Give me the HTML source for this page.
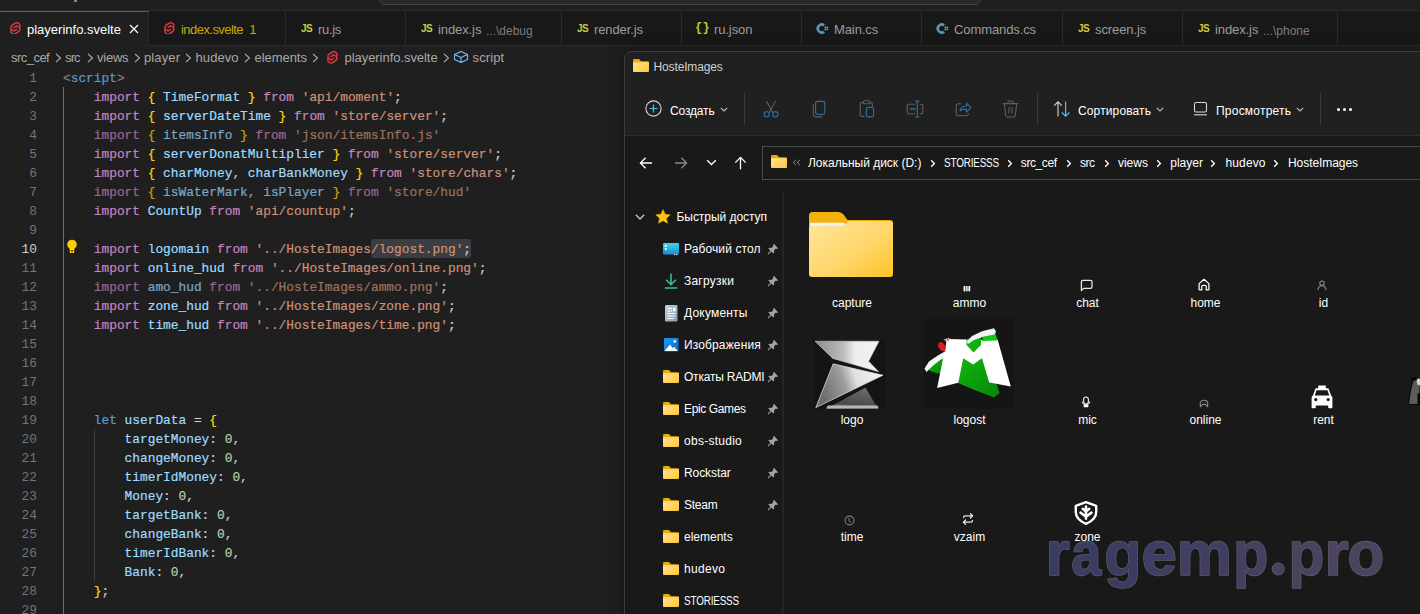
<!DOCTYPE html>
<html><head><meta charset="utf-8">
<style>
*{margin:0;padding:0;box-sizing:border-box}
html,body{width:1420px;height:614px;overflow:hidden;background:#1f1f1f;font-family:"Liberation Sans",sans-serif}
.abs{position:absolute}
#tb{position:absolute;left:0;top:0;width:1420px;height:10px;background:#1f1f1f}
#cc{position:absolute;left:379px;top:-30px;width:602px;height:35px;border:1px solid #454545;border-radius:6px;background:#2a2a2a}
#tabs{position:absolute;left:0;top:10px;width:1420px;height:36px;background:#181818;border-top:1px solid #2b2b2b;border-bottom:1px solid #2b2b2b}
.tab{position:absolute;top:10px;height:36px;border-right:1px solid #2b2b2b;border-top:1px solid #2b2b2b;border-bottom:1px solid #2b2b2b;background:#181818}
.tab.act{background:#1f1f1f;border-top:1px solid #0078d4;border-bottom:none;top:11px;height:35px}
.tabt{top:22px;font-size:13px;line-height:16px;white-space:nowrap}
.tabd{top:23px;font-size:12px;line-height:16px;color:#7d7d7d;white-space:nowrap}
.jsic{font:bold 10px/12px "Liberation Sans",sans-serif;color:#cbcb41;letter-spacing:-0.5px}
.jsonic{font:bold 12px/14px "Liberation Mono",monospace;color:#cbcb41;letter-spacing:-1px}
.bct{top:50px;font-size:13px;line-height:16px;color:#a9a9a9;white-space:nowrap}
.cl{position:absolute;height:19px;line-height:19px;font-family:"Liberation Mono",monospace;font-size:12.83px;white-space:pre;padding-top:1px;-webkit-text-stroke:0.2px currentColor}
.dim{opacity:0.72}
.ln{position:absolute;left:0;width:37px;height:19px;line-height:19px;text-align:right;font-family:"Liberation Mono",monospace;font-size:12.83px;color:#6e7681;padding-top:1px}
.ln.act{color:#cccccc}
.ext{font-size:12px;line-height:15px;white-space:nowrap}
.lbl{z-index:3;width:118px;text-align:center;color:#ffffff}
#exx{position:absolute;left:624px;top:52px;width:820px;height:600px;border:1px solid #3c3c3c;border-radius:8px 0 0 0;background:#191919;overflow:hidden}
</style></head><body>
<div id="tb"></div>
<div id="cc"></div>
<div class="abs" style="left:74px;top:0;width:3px;height:2px;background:#9a9a9a;border-radius:1px"></div>
<div id="tabs"></div>
<div class="tab act" style="left:0px;width:149px"></div>
<svg class="abs" style="left:9.5px;top:21.8px" width="11" height="12.5" viewBox="2 0 20.4 23.4"><path d="M10.354 21.125a4.44 4.44 0 0 1-4.765-1.767 4.109 4.109 0 0 1-.703-3.107 3.898 3.898 0 0 1 .134-.522l.105-.321.287.21a7.21 7.21 0 0 0 2.186 1.092l.208.063-.02.208a1.253 1.253 0 0 0 .226.83 1.337 1.337 0 0 0 1.435.533 1.231 1.231 0 0 0 .343-.15l5.59-3.562a1.164 1.164 0 0 0 .524-.778 1.242 1.242 0 0 0-.211-.937 1.338 1.338 0 0 0-1.435-.533 1.23 1.23 0 0 0-.343.15l-2.133 1.36a4.078 4.078 0 0 1-1.135.499 4.44 4.44 0 0 1-4.765-1.766 4.108 4.108 0 0 1-.702-3.108 3.855 3.855 0 0 1 1.742-2.582l5.589-3.563a4.072 4.072 0 0 1 1.135-.499 4.44 4.44 0 0 1 4.765 1.767 4.109 4.109 0 0 1 .703 3.107 3.943 3.943 0 0 1-.134.522l-.105.321-.286-.21a7.204 7.204 0 0 0-2.187-1.093l-.208-.063.02-.207a1.255 1.255 0 0 0-.226-.831 1.337 1.337 0 0 0-1.435-.532 1.231 1.231 0 0 0-.343.15L8.62 9.368a1.162 1.162 0 0 0-.524.778 1.24 1.24 0 0 0 .211.937 1.338 1.338 0 0 0 1.435.533 1.235 1.235 0 0 0 .344-.151l2.132-1.36a4.067 4.067 0 0 1 1.135-.498 4.44 4.44 0 0 1 4.765 1.766 4.108 4.108 0 0 1 .702 3.108 3.857 3.857 0 0 1-1.742 2.583l-5.589 3.562a4.072 4.072 0 0 1-1.135.499m10.358-17.95C18.484-.015 14.082-.96 10.9 1.068L5.31 4.63a6.412 6.412 0 0 0-2.896 4.295 6.753 6.753 0 0 0 .666 4.336 6.43 6.43 0 0 0-.96 2.396 6.833 6.833 0 0 0 1.168 5.167c2.229 3.19 6.63 4.135 9.812 2.108l5.59-3.562a6.41 6.41 0 0 0 2.896-4.295 6.756 6.756 0 0 0-.665-4.336 6.429 6.429 0 0 0 .958-2.396 6.831 6.831 0 0 0-1.167-5.168Z" fill="#e0383e"/></svg>
<div class="abs tabt" style="left:27px;color:#ffffff;letter-spacing:0px">playerinfo.svelte</div>
<svg class="abs" style="left:129px;top:24px" width="10" height="10" viewBox="0 0 10 10"><path d="M1 1L9 9M9 1L1 9" stroke="#ffffff" stroke-width="1.2"/></svg>
<div class="tab" style="left:149px;width:137px"></div>
<svg class="abs" style="left:163.5px;top:21.8px" width="11" height="12.5" viewBox="2 0 20.4 23.4"><path d="M10.354 21.125a4.44 4.44 0 0 1-4.765-1.767 4.109 4.109 0 0 1-.703-3.107 3.898 3.898 0 0 1 .134-.522l.105-.321.287.21a7.21 7.21 0 0 0 2.186 1.092l.208.063-.02.208a1.253 1.253 0 0 0 .226.83 1.337 1.337 0 0 0 1.435.533 1.231 1.231 0 0 0 .343-.15l5.59-3.562a1.164 1.164 0 0 0 .524-.778 1.242 1.242 0 0 0-.211-.937 1.338 1.338 0 0 0-1.435-.533 1.23 1.23 0 0 0-.343.15l-2.133 1.36a4.078 4.078 0 0 1-1.135.499 4.44 4.44 0 0 1-4.765-1.766 4.108 4.108 0 0 1-.702-3.108 3.855 3.855 0 0 1 1.742-2.582l5.589-3.563a4.072 4.072 0 0 1 1.135-.499 4.44 4.44 0 0 1 4.765 1.767 4.109 4.109 0 0 1 .703 3.107 3.943 3.943 0 0 1-.134.522l-.105.321-.286-.21a7.204 7.204 0 0 0-2.187-1.093l-.208-.063.02-.207a1.255 1.255 0 0 0-.226-.831 1.337 1.337 0 0 0-1.435-.532 1.231 1.231 0 0 0-.343.15L8.62 9.368a1.162 1.162 0 0 0-.524.778 1.24 1.24 0 0 0 .211.937 1.338 1.338 0 0 0 1.435.533 1.235 1.235 0 0 0 .344-.151l2.132-1.36a4.067 4.067 0 0 1 1.135-.498 4.44 4.44 0 0 1 4.765 1.766 4.108 4.108 0 0 1 .702 3.108 3.857 3.857 0 0 1-1.742 2.583l-5.589 3.562a4.072 4.072 0 0 1-1.135.499m10.358-17.95C18.484-.015 14.082-.96 10.9 1.068L5.31 4.63a6.412 6.412 0 0 0-2.896 4.295 6.753 6.753 0 0 0 .666 4.336 6.43 6.43 0 0 0-.96 2.396 6.833 6.833 0 0 0 1.168 5.167c2.229 3.19 6.63 4.135 9.812 2.108l5.59-3.562a6.41 6.41 0 0 0 2.896-4.295 6.756 6.756 0 0 0-.665-4.336 6.429 6.429 0 0 0 .958-2.396 6.831 6.831 0 0 0-1.167-5.168Z" fill="#e0383e"/></svg>
<div class="abs tabt" style="left:181px;color:#cca700;letter-spacing:-0.55px">index.svelte&nbsp;&nbsp;1</div>
<div class="tab" style="left:286px;width:120px"></div>
<div class="abs jsic" style="left:301px;top:23px">JS</div>
<div class="abs tabt" style="left:318px;color:#9d9d9d;letter-spacing:-0.3px">ru.js</div>
<div class="tab" style="left:406px;width:156px"></div>
<div class="abs jsic" style="left:421px;top:23px">JS</div>
<div class="abs tabt" style="left:438px;color:#9d9d9d;letter-spacing:-0.1px">index.js</div>
<div class="abs tabd" style="left:486px">...\debug</div>
<div class="tab" style="left:562px;width:120px"></div>
<div class="abs jsic" style="left:577px;top:23px">JS</div>
<div class="abs tabt" style="left:594px;color:#9d9d9d;letter-spacing:-0.1px">render.js</div>
<div class="tab" style="left:682px;width:120px"></div>
<div class="abs jsonic" style="left:695px;top:21px">{&thinsp;}</div>
<div class="abs tabt" style="left:714px;color:#9d9d9d;letter-spacing:-0.1px">ru.json</div>
<div class="tab" style="left:802px;width:120px"></div>
<svg class="abs" style="left:816px;top:22px" width="13" height="13" viewBox="0 0 13 13"><path d="M8.2 3.3A4 4 0 1 0 8.2 9.7" fill="none" stroke="#519aba" stroke-width="2.6"/><path d="M9.3 4.3v4.2M11.3 4.3v4.2M8.3 5.4h4M8.3 7.4h4" stroke="#519aba" stroke-width="0.9"/></svg>
<div class="abs tabt" style="left:834px;color:#9d9d9d;letter-spacing:-0.1px">Main.cs</div>
<div class="tab" style="left:922px;width:141px"></div>
<svg class="abs" style="left:936px;top:22px" width="13" height="13" viewBox="0 0 13 13"><path d="M8.2 3.3A4 4 0 1 0 8.2 9.7" fill="none" stroke="#519aba" stroke-width="2.6"/><path d="M9.3 4.3v4.2M11.3 4.3v4.2M8.3 5.4h4M8.3 7.4h4" stroke="#519aba" stroke-width="0.9"/></svg>
<div class="abs tabt" style="left:954px;color:#9d9d9d;letter-spacing:-0.1px">Commands.cs</div>
<div class="tab" style="left:1063px;width:120px"></div>
<div class="abs jsic" style="left:1078px;top:23px">JS</div>
<div class="abs tabt" style="left:1095px;color:#9d9d9d;letter-spacing:-0.1px">screen.js</div>
<div class="tab" style="left:1183px;width:155px"></div>
<div class="abs jsic" style="left:1198px;top:23px">JS</div>
<div class="abs tabt" style="left:1215px;color:#9d9d9d;letter-spacing:-0.1px">index.js</div>
<div class="abs tabd" style="left:1263px">...\phone</div>
<div class="abs bct" style="left:11.0px;letter-spacing:-0.53px">src_cef</div>
<div class="abs bct" style="left:65.0px;letter-spacing:-0.86px">src</div>
<div class="abs bct" style="left:97.0px;letter-spacing:-0.23px">views</div>
<div class="abs bct" style="left:144.0px;letter-spacing:0.12px">player</div>
<div class="abs bct" style="left:195.5px;letter-spacing:0.09px">hudevo</div>
<div class="abs bct" style="left:254.5px;letter-spacing:-0.05px">elements</div>
<div class="abs bct" style="left:344.5px;letter-spacing:-0.05px">playerinfo.svelte</div>
<div class="abs bct" style="left:472.5px;letter-spacing:0.13px">script</div>
<svg class="abs" style="left:55px;top:53px" width="7" height="10" viewBox="0 0 7 10"><path d="M1 1l4.5 4-4.5 4" fill="none" stroke="#a9a9a9" stroke-width="1.1"/></svg>
<svg class="abs" style="left:87px;top:53px" width="7" height="10" viewBox="0 0 7 10"><path d="M1 1l4.5 4-4.5 4" fill="none" stroke="#a9a9a9" stroke-width="1.1"/></svg>
<svg class="abs" style="left:134px;top:53px" width="7" height="10" viewBox="0 0 7 10"><path d="M1 1l4.5 4-4.5 4" fill="none" stroke="#a9a9a9" stroke-width="1.1"/></svg>
<svg class="abs" style="left:185px;top:53px" width="7" height="10" viewBox="0 0 7 10"><path d="M1 1l4.5 4-4.5 4" fill="none" stroke="#a9a9a9" stroke-width="1.1"/></svg>
<svg class="abs" style="left:244px;top:53px" width="7" height="10" viewBox="0 0 7 10"><path d="M1 1l4.5 4-4.5 4" fill="none" stroke="#a9a9a9" stroke-width="1.1"/></svg>
<svg class="abs" style="left:312px;top:53px" width="7" height="10" viewBox="0 0 7 10"><path d="M1 1l4.5 4-4.5 4" fill="none" stroke="#a9a9a9" stroke-width="1.1"/></svg>
<svg class="abs" style="left:443px;top:53px" width="7" height="10" viewBox="0 0 7 10"><path d="M1 1l4.5 4-4.5 4" fill="none" stroke="#a9a9a9" stroke-width="1.1"/></svg>
<svg class="abs" style="left:327px;top:51px" width="11" height="12.5" viewBox="2 0 20.4 23.4"><path d="M10.354 21.125a4.44 4.44 0 0 1-4.765-1.767 4.109 4.109 0 0 1-.703-3.107 3.898 3.898 0 0 1 .134-.522l.105-.321.287.21a7.21 7.21 0 0 0 2.186 1.092l.208.063-.02.208a1.253 1.253 0 0 0 .226.83 1.337 1.337 0 0 0 1.435.533 1.231 1.231 0 0 0 .343-.15l5.59-3.562a1.164 1.164 0 0 0 .524-.778 1.242 1.242 0 0 0-.211-.937 1.338 1.338 0 0 0-1.435-.533 1.23 1.23 0 0 0-.343.15l-2.133 1.36a4.078 4.078 0 0 1-1.135.499 4.44 4.44 0 0 1-4.765-1.766 4.108 4.108 0 0 1-.702-3.108 3.855 3.855 0 0 1 1.742-2.582l5.589-3.563a4.072 4.072 0 0 1 1.135-.499 4.44 4.44 0 0 1 4.765 1.767 4.109 4.109 0 0 1 .703 3.107 3.943 3.943 0 0 1-.134.522l-.105.321-.286-.21a7.204 7.204 0 0 0-2.187-1.093l-.208-.063.02-.207a1.255 1.255 0 0 0-.226-.831 1.337 1.337 0 0 0-1.435-.532 1.231 1.231 0 0 0-.343.15L8.62 9.368a1.162 1.162 0 0 0-.524.778 1.24 1.24 0 0 0 .211.937 1.338 1.338 0 0 0 1.435.533 1.235 1.235 0 0 0 .344-.151l2.132-1.36a4.067 4.067 0 0 1 1.135-.498 4.44 4.44 0 0 1 4.765 1.766 4.108 4.108 0 0 1 .702 3.108 3.857 3.857 0 0 1-1.742 2.583l-5.589 3.562a4.072 4.072 0 0 1-1.135.499m10.358-17.95C18.484-.015 14.082-.96 10.9 1.068L5.31 4.63a6.412 6.412 0 0 0-2.896 4.295 6.753 6.753 0 0 0 .666 4.336 6.43 6.43 0 0 0-.96 2.396 6.833 6.833 0 0 0 1.168 5.167c2.229 3.19 6.63 4.135 9.812 2.108l5.59-3.562a6.41 6.41 0 0 0 2.896-4.295 6.756 6.756 0 0 0-.665-4.336 6.429 6.429 0 0 0 .958-2.396 6.831 6.831 0 0 0-1.167-5.168Z" fill="#e0383e"/></svg>
<svg class="abs" style="left:453px;top:50px" width="16" height="14" viewBox="0 0 16 14"><path d="M8 1.5 14.5 4.5v5L8 12.5 1.5 9.5v-5z M1.5 4.5 8 7.5 14.5 4.5 M8 7.5v5" fill="none" stroke="#75beff" stroke-width="1.1" stroke-linejoin="round"/></svg>
<!-- indent guides -->
<div class="abs" style="left:63px;top:87px;width:1px;height:527px;background:#707070"></div>
<div class="abs" style="left:94px;top:429px;width:1px;height:152px;background:#404040"></div>
<div class="abs" style="left:371px;top:239px;width:100px;height:19px;background:#3a3d41;border-radius:3px"></div>
<div class="ln" style="top:68px">1</div>
<div class="ln" style="top:87px">2</div>
<div class="ln" style="top:106px">3</div>
<div class="ln" style="top:125px">4</div>
<div class="ln" style="top:144px">5</div>
<div class="ln" style="top:163px">6</div>
<div class="ln" style="top:182px">7</div>
<div class="ln" style="top:201px">8</div>
<div class="ln" style="top:220px">9</div>
<div class="ln act" style="top:239px">10</div>
<div class="ln" style="top:258px">11</div>
<div class="ln" style="top:277px">12</div>
<div class="ln" style="top:296px">13</div>
<div class="ln" style="top:315px">14</div>
<div class="ln" style="top:334px">15</div>
<div class="ln" style="top:353px">16</div>
<div class="ln" style="top:372px">17</div>
<div class="ln" style="top:391px">18</div>
<div class="ln" style="top:410px">19</div>
<div class="ln" style="top:429px">20</div>
<div class="ln" style="top:448px">21</div>
<div class="ln" style="top:467px">22</div>
<div class="ln" style="top:486px">23</div>
<div class="ln" style="top:505px">24</div>
<div class="ln" style="top:524px">25</div>
<div class="ln" style="top:543px">26</div>
<div class="ln" style="top:562px">27</div>
<div class="ln" style="top:581px">28</div>
<div class="ln" style="top:600px">29</div>
<div class="cl" style="top:68px;left:63.00px"><span style="color:#808080">&lt;</span><span style="color:#569CD6">script</span><span style="color:#808080">&gt;</span></div>
<div class="cl" style="top:87px;left:93.80px"><span style="color:#C586C0">import</span><span style="color:#CCCCCC">&nbsp;</span><span style="color:#FFD700">{</span><span style="color:#CCCCCC">&nbsp;</span><span style="color:#9CDCFE">TimeFormat</span><span style="color:#CCCCCC">&nbsp;</span><span style="color:#FFD700">}</span><span style="color:#CCCCCC">&nbsp;</span><span style="color:#C586C0">from</span><span style="color:#CCCCCC">&nbsp;</span><span style="color:#CE9178">&#x27;api/moment&#x27;</span><span style="color:#CCCCCC">;</span></div>
<div class="cl" style="top:106px;left:93.80px"><span style="color:#C586C0">import</span><span style="color:#CCCCCC">&nbsp;</span><span style="color:#FFD700">{</span><span style="color:#CCCCCC">&nbsp;</span><span style="color:#9CDCFE">serverDateTime</span><span style="color:#CCCCCC">&nbsp;</span><span style="color:#FFD700">}</span><span style="color:#CCCCCC">&nbsp;</span><span style="color:#C586C0">from</span><span style="color:#CCCCCC">&nbsp;</span><span style="color:#CE9178">&#x27;store/server&#x27;</span><span style="color:#CCCCCC">;</span></div>
<div class="cl" style="top:125px;left:93.80px"><span class="dim"><span style="color:#C586C0">import</span><span style="color:#CCCCCC">&nbsp;</span><span style="color:#FFD700">{</span><span style="color:#CCCCCC">&nbsp;</span><span style="color:#9CDCFE">itemsInfo</span><span style="color:#CCCCCC">&nbsp;</span><span style="color:#FFD700">}</span><span style="color:#CCCCCC">&nbsp;</span><span style="color:#C586C0">from</span><span style="color:#CCCCCC">&nbsp;</span><span style="color:#CE9178">&#x27;json/itemsInfo.js&#x27;</span></span></div>
<div class="cl" style="top:144px;left:93.80px"><span style="color:#C586C0">import</span><span style="color:#CCCCCC">&nbsp;</span><span style="color:#FFD700">{</span><span style="color:#CCCCCC">&nbsp;</span><span style="color:#9CDCFE">serverDonatMultiplier</span><span style="color:#CCCCCC">&nbsp;</span><span style="color:#FFD700">}</span><span style="color:#CCCCCC">&nbsp;</span><span style="color:#C586C0">from</span><span style="color:#CCCCCC">&nbsp;</span><span style="color:#CE9178">&#x27;store/server&#x27;</span><span style="color:#CCCCCC">;</span></div>
<div class="cl" style="top:163px;left:93.80px"><span style="color:#C586C0">import</span><span style="color:#CCCCCC">&nbsp;</span><span style="color:#FFD700">{</span><span style="color:#CCCCCC">&nbsp;</span><span style="color:#9CDCFE">charMoney</span><span style="color:#CCCCCC">,&nbsp;</span><span style="color:#9CDCFE">charBankMoney</span><span style="color:#CCCCCC">&nbsp;</span><span style="color:#FFD700">}</span><span style="color:#CCCCCC">&nbsp;</span><span style="color:#C586C0">from</span><span style="color:#CCCCCC">&nbsp;</span><span style="color:#CE9178">&#x27;store/chars&#x27;</span><span style="color:#CCCCCC">;</span></div>
<div class="cl" style="top:182px;left:93.80px"><span class="dim"><span style="color:#C586C0">import</span><span style="color:#CCCCCC">&nbsp;</span><span style="color:#FFD700">{</span><span style="color:#CCCCCC">&nbsp;</span><span style="color:#9CDCFE">isWaterMark</span><span style="color:#CCCCCC">,&nbsp;</span><span style="color:#9CDCFE">isPlayer</span><span style="color:#CCCCCC">&nbsp;</span><span style="color:#FFD700">}</span><span style="color:#CCCCCC">&nbsp;</span><span style="color:#C586C0">from</span><span style="color:#CCCCCC">&nbsp;</span><span style="color:#CE9178">&#x27;store/hud&#x27;</span></span></div>
<div class="cl" style="top:201px;left:93.80px"><span style="color:#C586C0">import</span><span style="color:#CCCCCC">&nbsp;</span><span style="color:#9CDCFE">CountUp</span><span style="color:#CCCCCC">&nbsp;</span><span style="color:#C586C0">from</span><span style="color:#CCCCCC">&nbsp;</span><span style="color:#CE9178">&#x27;api/countup&#x27;</span><span style="color:#CCCCCC">;</span></div>

<div class="cl" style="top:239px;left:93.80px"><span style="color:#C586C0">import</span><span style="color:#CCCCCC">&nbsp;</span><span style="color:#9CDCFE">logomain</span><span style="color:#CCCCCC">&nbsp;</span><span style="color:#C586C0">from</span><span style="color:#CCCCCC">&nbsp;</span><span style="color:#CE9178">&#x27;../HosteImages/logost.png&#x27;</span><span style="color:#CCCCCC">;</span></div>
<div class="cl" style="top:258px;left:93.80px"><span style="color:#C586C0">import</span><span style="color:#CCCCCC">&nbsp;</span><span style="color:#9CDCFE">online_hud</span><span style="color:#CCCCCC">&nbsp;</span><span style="color:#C586C0">from</span><span style="color:#CCCCCC">&nbsp;</span><span style="color:#CE9178">&#x27;../HosteImages/online.png&#x27;</span><span style="color:#CCCCCC">;</span></div>
<div class="cl" style="top:277px;left:93.80px"><span class="dim"><span style="color:#C586C0">import</span><span style="color:#CCCCCC">&nbsp;</span><span style="color:#9CDCFE">amo_hud</span><span style="color:#CCCCCC">&nbsp;</span><span style="color:#C586C0">from</span><span style="color:#CCCCCC">&nbsp;</span><span style="color:#CE9178">&#x27;../HosteImages/ammo.png&#x27;</span></span><span style="color:#CCCCCC">;</span></div>
<div class="cl" style="top:296px;left:93.80px"><span style="color:#C586C0">import</span><span style="color:#CCCCCC">&nbsp;</span><span style="color:#9CDCFE">zone_hud</span><span style="color:#CCCCCC">&nbsp;</span><span style="color:#C586C0">from</span><span style="color:#CCCCCC">&nbsp;</span><span style="color:#CE9178">&#x27;../HosteImages/zone.png&#x27;</span><span style="color:#CCCCCC">;</span></div>
<div class="cl" style="top:315px;left:93.80px"><span style="color:#C586C0">import</span><span style="color:#CCCCCC">&nbsp;</span><span style="color:#9CDCFE">time_hud</span><span style="color:#CCCCCC">&nbsp;</span><span style="color:#C586C0">from</span><span style="color:#CCCCCC">&nbsp;</span><span style="color:#CE9178">&#x27;../HosteImages/time.png&#x27;</span><span style="color:#CCCCCC">;</span></div>




<div class="cl" style="top:410px;left:93.80px"><span style="color:#569CD6">let</span><span style="color:#CCCCCC">&nbsp;</span><span style="color:#9CDCFE">userData</span><span style="color:#CCCCCC">&nbsp;</span><span style="color:#D4D4D4">=</span><span style="color:#CCCCCC">&nbsp;</span><span style="color:#FFD700">{</span></div>
<div class="cl" style="top:429px;left:124.60px"><span style="color:#9CDCFE">targetMoney</span><span style="color:#CCCCCC">:&nbsp;</span><span style="color:#B5CEA8">0</span><span style="color:#CCCCCC">,</span></div>
<div class="cl" style="top:448px;left:124.60px"><span style="color:#9CDCFE">changeMoney</span><span style="color:#CCCCCC">:&nbsp;</span><span style="color:#B5CEA8">0</span><span style="color:#CCCCCC">,</span></div>
<div class="cl" style="top:467px;left:124.60px"><span style="color:#9CDCFE">timerIdMoney</span><span style="color:#CCCCCC">:&nbsp;</span><span style="color:#B5CEA8">0</span><span style="color:#CCCCCC">,</span></div>
<div class="cl" style="top:486px;left:124.60px"><span style="color:#9CDCFE">Money</span><span style="color:#CCCCCC">:&nbsp;</span><span style="color:#B5CEA8">0</span><span style="color:#CCCCCC">,</span></div>
<div class="cl" style="top:505px;left:124.60px"><span style="color:#9CDCFE">targetBank</span><span style="color:#CCCCCC">:&nbsp;</span><span style="color:#B5CEA8">0</span><span style="color:#CCCCCC">,</span></div>
<div class="cl" style="top:524px;left:124.60px"><span style="color:#9CDCFE">changeBank</span><span style="color:#CCCCCC">:&nbsp;</span><span style="color:#B5CEA8">0</span><span style="color:#CCCCCC">,</span></div>
<div class="cl" style="top:543px;left:124.60px"><span style="color:#9CDCFE">timerIdBank</span><span style="color:#CCCCCC">:&nbsp;</span><span style="color:#B5CEA8">0</span><span style="color:#CCCCCC">,</span></div>
<div class="cl" style="top:562px;left:124.60px"><span style="color:#9CDCFE">Bank</span><span style="color:#CCCCCC">:&nbsp;</span><span style="color:#B5CEA8">0</span><span style="color:#CCCCCC">,</span></div>
<div class="cl" style="top:581px;left:93.80px"><span style="color:#FFD700">}</span><span style="color:#CCCCCC">;</span></div>

<!-- lightbulb -->
<svg class="abs" style="left:66px;top:239px" width="12" height="15" viewBox="0 0 12 15"><circle cx="6" cy="5.5" r="4.8" fill="#ffcc00"/><rect x="3.8" y="8" width="4.4" height="6" fill="#ffcc00"/><rect x="5.2" y="11" width="1.6" height="1.6" fill="#1f1f1f"/></svg>

<svg width="0" height="0" style="position:absolute"><defs><linearGradient id="fgrad" x1="0" y1="0" x2="1" y2="1"><stop offset="0" stop-color="#ffe58f"/><stop offset="1" stop-color="#ffc73a"/></linearGradient></defs></svg>
<div class="abs" style="left:624px;top:51px;width:820px;height:600px;border:1px solid #3d3d3d;border-radius:8px 0 0 0;background:#202020;box-shadow:0 0 18px rgba(0,0,0,0.35)"></div>
<div class="abs" style="left:625px;top:135px;width:800px;height:1px;background:#2e2e2e"></div>
<div class="abs" style="left:625px;top:136px;width:800px;height:480px;background:#191919"></div>
<div class="abs" style="left:625px;top:136px;width:1px;height:480px;background:#131313"></div>
<svg class="abs" style="left:633px;top:59px" width="16" height="13" viewBox="0 0 16 13"><path d="M0 1.2Q0 0 1.2 0H6L8 2.2H14.8Q16 2.2 16 3.4V6H0z" fill="#eda900"/><rect x="0" y="3.3" width="16" height="9.7" rx="1.1" fill="url(#fgrad)"/></svg>
<div class="abs ext" style="left:653.6px;top:60.0px;font-size:12px;color:#cfcfcf;letter-spacing:-0.16px;">HosteImages</div>
<svg class="abs" style="left:645px;top:100px" width="17" height="17" viewBox="0 0 17 17"><circle cx="8.5" cy="8.5" r="7.6" fill="none" stroke="#d6d6d6" stroke-width="1.1"/><path d="M8.5 4.6v7.8M4.6 8.5h7.8" stroke="#4cc2ff" stroke-width="1.2"/></svg>
<div class="abs ext" style="left:670.0px;top:103.5px;font-size:12px;color:#ffffff;letter-spacing:-0.15px;">Создать</div>
<svg class="abs" style="left:720px;top:107px" width="8" height="5" viewBox="0 0 8 5"><path d="M0.8 0.8 4 4 7.2 0.8" fill="none" stroke="#bdbdbd" stroke-width="1.1"/></svg>
<div class="abs" style="left:744px;top:93px;width:1px;height:32px;background:#3a3a3a"></div>
<svg class="abs" style="left:763px;top:100px" width="16" height="18" viewBox="0 0 16 18"><path d="M3.5 1 9.6 12.6M12.5 1 6.4 12.6" stroke="#5f5f5f" stroke-width="1.1"/><circle cx="3.7" cy="14.3" r="2.6" fill="none" stroke="#2e6d94" stroke-width="1.2"/><circle cx="12.3" cy="14.3" r="2.6" fill="none" stroke="#2e6d94" stroke-width="1.2"/></svg>
<svg class="abs" style="left:812px;top:100px" width="15" height="18" viewBox="0 0 15 18"><rect x="3.6" y="1.3" width="9.2" height="13" rx="1.8" fill="none" stroke="#2e6d94" stroke-width="1.2"/><path d="M1.3 4.5v9.8q0 2.6 2.6 2.6h6.2" fill="none" stroke="#5f5f5f" stroke-width="1.1"/></svg>
<svg class="abs" style="left:859px;top:100px" width="16" height="18" viewBox="0 0 16 18"><path d="M4.2 2.6H2.8Q1.2 2.6 1.2 4.2v10.6q0 1.6 1.6 1.6h2.6M11.2 2.6h0.6q1.6 0 1.6 1.6v2.6" fill="none" stroke="#5f5f5f" stroke-width="1.1"/><rect x="4.4" y="0.8" width="6.6" height="3" rx="1" fill="none" stroke="#5f5f5f" stroke-width="1.1"/><rect x="7.4" y="7.4" width="7.2" height="9.4" rx="1.5" fill="none" stroke="#2e6d94" stroke-width="1.2"/></svg>
<svg class="abs" style="left:906px;top:100px" width="18" height="18" viewBox="0 0 18 18"><path d="M9 4.2H3q-1.8 0-1.8 1.8v6q0 1.8 1.8 1.8h6M13.6 4.2h1.6q1.6 0 1.6 1.8v6q0 1.8-1.6 1.8h-1.6" fill="none" stroke="#5f5f5f" stroke-width="1.1"/><path d="M4 9h5.6M11.3 1.2v15.6M9.2 1.2h4.2M9.2 16.8h4.2" stroke="#2e6d94" stroke-width="1.3"/></svg>
<svg class="abs" style="left:955px;top:100px" width="17" height="17" viewBox="0 0 17 17"><path d="M6 3.8H3.2Q1.2 3.8 1.2 5.8v8.2q0 1.8 1.8 1.8h8.4q1.8 0 1.8-1.8v-1" fill="none" stroke="#5f5f5f" stroke-width="1.1"/><path d="M5.2 10.8Q6 6 11.4 6V3.2l4.6 4.4-4.6 4.4V9.2Q7.4 9.2 5.2 10.8z" fill="none" stroke="#2e6d94" stroke-width="1.2" stroke-linejoin="round"/></svg>
<svg class="abs" style="left:1002px;top:100px" width="17" height="18" viewBox="0 0 17 18"><path d="M0.8 3.6h15.4M6 3.4V2q0-1 1-1h3q1 0 1 1v1.4M2.4 3.8l1.2 11.4q0.2 1.8 2 1.8h5.8q1.8 0 2-1.8l1.2-11.4M7 7v6.6M10 7v6.6" fill="none" stroke="#5f5f5f" stroke-width="1.1"/></svg>
<div class="abs" style="left:1037px;top:93px;width:1px;height:32px;background:#3a3a3a"></div>
<svg class="abs" style="left:1053px;top:100px" width="18" height="18" viewBox="0 0 18 18"><path d="M5 16.5V1.8M1.2 5.6 5 1.8 8.8 5.6" fill="none" stroke="#d6d6d6" stroke-width="1.1"/><path d="M12.6 1.5v14.7M8.8 12.4l3.8 3.8 3.8-3.8" fill="none" stroke="#4cc2ff" stroke-width="1.2"/></svg>
<div class="abs ext" style="left:1078.0px;top:103.5px;font-size:12px;color:#ffffff;letter-spacing:0.13px;">Сортировать</div>
<svg class="abs" style="left:1156px;top:107px" width="8" height="5" viewBox="0 0 8 5"><path d="M0.8 0.8 4 4 7.2 0.8" fill="none" stroke="#bdbdbd" stroke-width="1.1"/></svg>
<svg class="abs" style="left:1193px;top:101px" width="15" height="15" viewBox="0 0 15 15"><rect x="1.5" y="1.5" width="12" height="9.5" rx="1.6" fill="none" stroke="#d6d6d6" stroke-width="1.1"/><path d="M1 13.8h13" stroke="#d6d6d6" stroke-width="1.1"/></svg>
<div class="abs ext" style="left:1216.0px;top:103.5px;font-size:12px;color:#ffffff;letter-spacing:0.22px;">Просмотреть</div>
<svg class="abs" style="left:1296px;top:107px" width="8" height="5" viewBox="0 0 8 5"><path d="M0.8 0.8 4 4 7.2 0.8" fill="none" stroke="#bdbdbd" stroke-width="1.1"/></svg>
<div class="abs" style="left:1320px;top:93px;width:1px;height:32px;background:#3a3a3a"></div>
<div class="abs" style="left:1337px;top:108px;width:3.4px;height:3.4px;border-radius:50%;background:#ffffff"></div>
<div class="abs" style="left:1343px;top:108px;width:3.4px;height:3.4px;border-radius:50%;background:#ffffff"></div>
<div class="abs" style="left:1349px;top:108px;width:3.4px;height:3.4px;border-radius:50%;background:#ffffff"></div>
<svg class="abs" style="left:639px;top:156px" width="14" height="14" viewBox="0 0 14 14"><path d="M13 7H1.6M6.6 1.8 1.4 7 6.6 12.2" fill="none" stroke="#ffffff" stroke-width="1.3"/></svg>
<svg class="abs" style="left:674px;top:156px" width="14" height="14" viewBox="0 0 14 14"><path d="M1 7h11.4M7.4 1.8 12.6 7 7.4 12.2" fill="none" stroke="#8a8a8a" stroke-width="1.3"/></svg>
<svg class="abs" style="left:706px;top:159px" width="11" height="7" viewBox="0 0 11 7"><path d="M1.2 1.2 5.5 5.5 9.8 1.2" fill="none" stroke="#ffffff" stroke-width="1.3"/></svg>
<svg class="abs" style="left:734px;top:156px" width="13" height="14" viewBox="0 0 13 14"><path d="M6.5 13.2V1.4M1.3 6.6 6.5 1.4 11.7 6.6" fill="none" stroke="#ffffff" stroke-width="1.3"/></svg>
<div class="abs" style="left:762px;top:146px;width:700px;height:34px;border:1px solid #4a4a4a;background:#191919"></div>
<svg class="abs" style="left:771px;top:155px" width="16" height="13" viewBox="0 0 16 13"><path d="M0 1.2Q0 0 1.2 0H6L8 2.2H14.8Q16 2.2 16 3.4V6H0z" fill="#eda900"/><rect x="0" y="3.3" width="16" height="9.7" rx="1.1" fill="url(#fgrad)"/></svg>
<svg class="abs" style="left:792px;top:159px" width="9" height="7" viewBox="0 0 9 7"><path d="M4 0.8 1.2 3.5 4 6.2M8 0.8 5.2 3.5 8 6.2" fill="none" stroke="#8a8a8a" stroke-width="1"/></svg>
<div class="abs ext" style="left:808.0px;top:156.0px;font-size:12px;color:#ffffff;letter-spacing:-0.01px;">Локальный диск (D:)</div>
<div class="abs ext" style="left:944.0px;top:156.0px;font-size:12px;color:#ffffff;transform:scaleX(0.824);transform-origin:0 0;letter-spacing:-0.2px">STORIESSS</div>
<div class="abs ext" style="left:1020.8px;top:156.0px;font-size:12px;color:#ffffff;letter-spacing:-0.41px;">src_cef</div>
<div class="abs ext" style="left:1080.0px;top:156.0px;font-size:12px;color:#ffffff;letter-spacing:-0.50px;">src</div>
<div class="abs ext" style="left:1118.0px;top:156.0px;font-size:12px;color:#ffffff;letter-spacing:-0.03px;">views</div>
<div class="abs ext" style="left:1170.3px;top:156.0px;font-size:12px;color:#ffffff;letter-spacing:-0.02px;">player</div>
<div class="abs ext" style="left:1225.5px;top:156.0px;font-size:12px;color:#ffffff;letter-spacing:0.13px;">hudevo</div>
<div class="abs ext" style="left:1288.0px;top:156.0px;font-size:12px;color:#ffffff;letter-spacing:-0.07px;">HosteImages</div>
<svg class="abs" style="left:930px;top:159px" width="6" height="9" viewBox="0 0 6 9"><path d="M1.2 1.2 4.4 4.5 1.2 7.8" fill="none" stroke="#ffffff" stroke-width="1.3"/></svg>
<svg class="abs" style="left:1007px;top:159px" width="6" height="9" viewBox="0 0 6 9"><path d="M1.2 1.2 4.4 4.5 1.2 7.8" fill="none" stroke="#ffffff" stroke-width="1.3"/></svg>
<svg class="abs" style="left:1066px;top:159px" width="6" height="9" viewBox="0 0 6 9"><path d="M1.2 1.2 4.4 4.5 1.2 7.8" fill="none" stroke="#ffffff" stroke-width="1.3"/></svg>
<svg class="abs" style="left:1104px;top:159px" width="6" height="9" viewBox="0 0 6 9"><path d="M1.2 1.2 4.4 4.5 1.2 7.8" fill="none" stroke="#ffffff" stroke-width="1.3"/></svg>
<svg class="abs" style="left:1156px;top:159px" width="6" height="9" viewBox="0 0 6 9"><path d="M1.2 1.2 4.4 4.5 1.2 7.8" fill="none" stroke="#ffffff" stroke-width="1.3"/></svg>
<svg class="abs" style="left:1210px;top:159px" width="6" height="9" viewBox="0 0 6 9"><path d="M1.2 1.2 4.4 4.5 1.2 7.8" fill="none" stroke="#ffffff" stroke-width="1.3"/></svg>
<svg class="abs" style="left:1273px;top:159px" width="6" height="9" viewBox="0 0 6 9"><path d="M1.2 1.2 4.4 4.5 1.2 7.8" fill="none" stroke="#ffffff" stroke-width="1.3"/></svg>
<div class="abs" style="left:782px;top:191px;width:2px;height:430px;background:#242424"></div>
<svg class="abs" style="left:635px;top:214px" width="10" height="6" viewBox="0 0 10 6"><path d="M0.8 0.8 5 5 9.2 0.8" fill="none" stroke="#c4c4c4" stroke-width="1.4"/></svg>
<svg class="abs" style="left:655px;top:209px" width="16" height="15" viewBox="0 0 16 15"><path d="M8 0.6l2.2 4.6 5 0.6-3.7 3.4 1 5-4.5-2.5-4.5 2.5 1-5L0.8 5.8l5-0.6z" fill="#ffc40d" stroke="#e5a000" stroke-width="0.6" stroke-linejoin="round"/></svg>
<div class="abs ext" style="left:676.5px;top:210.0px;font-size:12px;color:#ffffff;letter-spacing:-0.05px;">Быстрый доступ</div>
<svg class="abs" style="left:663px;top:243px" width="16" height="13" viewBox="0 0 16 13"><defs><linearGradient id="dg" x1="0" y1="0" x2="0" y2="1"><stop offset="0" stop-color="#3fd2ee"/><stop offset="1" stop-color="#168fd0"/></linearGradient></defs><rect x="0" y="0" width="16" height="11.5" rx="1.2" fill="url(#dg)"/><rect x="1.8" y="2" width="2" height="1.8" fill="#fff"/><rect x="1.8" y="5" width="2" height="1.8" fill="#fff"/><rect x="11" y="11" width="1.2" height="1.2" fill="#cfd8e0"/><rect x="13" y="11" width="1.2" height="1.2" fill="#cfd8e0"/></svg>
<div class="abs ext" style="left:684.0px;top:242.0px;font-size:12px;color:#ffffff;letter-spacing:0.11px;">Рабочий стол</div>
<svg class="abs" style="left:767px;top:243px" width="12" height="12" viewBox="0 0 12 12"><path d="M6.8 0.8 11.2 5.2 10.2 6 8.9 5.6 7 7.5 7.2 9.8 6.3 10.6 4.3 8.6 1.3 11.4 0.6 10.7 3.4 7.7 1.4 5.7 2.2 4.8 4.5 5 6.4 3.1 6 1.8z" fill="#9ea5ac"/></svg>
<svg class="abs" style="left:664px;top:273px" width="14" height="16" viewBox="0 0 14 16"><path d="M7 0.5v11M2.2 6.8 7 11.6 11.8 6.8M0.8 15h12.4" fill="none" stroke="#2fbf9b" stroke-width="1.6"/></svg>
<div class="abs ext" style="left:684.0px;top:274.0px;font-size:12px;color:#ffffff;letter-spacing:0.22px;">Загрузки</div>
<svg class="abs" style="left:767px;top:275px" width="12" height="12" viewBox="0 0 12 12"><path d="M6.8 0.8 11.2 5.2 10.2 6 8.9 5.6 7 7.5 7.2 9.8 6.3 10.6 4.3 8.6 1.3 11.4 0.6 10.7 3.4 7.7 1.4 5.7 2.2 4.8 4.5 5 6.4 3.1 6 1.8z" fill="#9ea5ac"/></svg>
<svg class="abs" style="left:665px;top:305px" width="13" height="17" viewBox="0 0 13 17"><defs><linearGradient id="dcg" x1="0" y1="0" x2="1" y2="1"><stop offset="0" stop-color="#c4d3e3"/><stop offset="1" stop-color="#7d9bb8"/></linearGradient></defs><rect x="0" y="0" width="12.5" height="16.5" rx="1.2" fill="url(#dcg)"/><path d="M2.5 3.5h4.5M2.5 6h4.5M2.5 8.5h8M2.5 11h8M2.5 13.5h6" stroke="#fff" stroke-width="1"/><rect x="8" y="2.8" width="2.6" height="3.4" fill="#fff"/></svg>
<div class="abs ext" style="left:684.0px;top:306.0px;font-size:12px;color:#ffffff;letter-spacing:0.19px;">Документы</div>
<svg class="abs" style="left:767px;top:307px" width="12" height="12" viewBox="0 0 12 12"><path d="M6.8 0.8 11.2 5.2 10.2 6 8.9 5.6 7 7.5 7.2 9.8 6.3 10.6 4.3 8.6 1.3 11.4 0.6 10.7 3.4 7.7 1.4 5.7 2.2 4.8 4.5 5 6.4 3.1 6 1.8z" fill="#9ea5ac"/></svg>
<svg class="abs" style="left:664px;top:338px" width="15" height="14" viewBox="0 0 15 14"><defs><linearGradient id="pg" x1="0" y1="0" x2="1" y2="1"><stop offset="0" stop-color="#1e9af0"/><stop offset="1" stop-color="#0b6ac4"/></linearGradient></defs><rect x="0" y="0" width="14.5" height="13.5" rx="1.2" fill="url(#pg)"/><path d="M0.5 13 6 6.6 10.6 13z" fill="#ffffff"/><path d="M5 13 10 8.8 14 13z" fill="#e8f2fb"/><circle cx="10.8" cy="3.4" r="1.3" fill="#fff"/></svg>
<div class="abs ext" style="left:684.0px;top:338.0px;font-size:12px;color:#ffffff;letter-spacing:0.13px;">Изображения</div>
<svg class="abs" style="left:767px;top:339px" width="12" height="12" viewBox="0 0 12 12"><path d="M6.8 0.8 11.2 5.2 10.2 6 8.9 5.6 7 7.5 7.2 9.8 6.3 10.6 4.3 8.6 1.3 11.4 0.6 10.7 3.4 7.7 1.4 5.7 2.2 4.8 4.5 5 6.4 3.1 6 1.8z" fill="#9ea5ac"/></svg>
<svg class="abs" style="left:663px;top:370px" width="16" height="13" viewBox="0 0 16 13"><path d="M0 1.2Q0 0 1.2 0H6L8 2.2H14.8Q16 2.2 16 3.4V6H0z" fill="#eda900"/><rect x="0" y="3.3" width="16" height="9.7" rx="1.1" fill="url(#fgrad)"/></svg>
<div class="abs ext" style="left:684.0px;top:370.0px;font-size:12px;color:#ffffff;letter-spacing:-0.21px;width:82px;overflow:hidden">Откаты RADMI</div>
<svg class="abs" style="left:767px;top:371px" width="12" height="12" viewBox="0 0 12 12"><path d="M6.8 0.8 11.2 5.2 10.2 6 8.9 5.6 7 7.5 7.2 9.8 6.3 10.6 4.3 8.6 1.3 11.4 0.6 10.7 3.4 7.7 1.4 5.7 2.2 4.8 4.5 5 6.4 3.1 6 1.8z" fill="#9ea5ac"/></svg>
<svg class="abs" style="left:663px;top:402px" width="16" height="13" viewBox="0 0 16 13"><path d="M0 1.2Q0 0 1.2 0H6L8 2.2H14.8Q16 2.2 16 3.4V6H0z" fill="#eda900"/><rect x="0" y="3.3" width="16" height="9.7" rx="1.1" fill="url(#fgrad)"/></svg>
<div class="abs ext" style="left:684.0px;top:402.0px;font-size:12px;color:#ffffff;letter-spacing:-0.37px;">Epic Games</div>
<svg class="abs" style="left:767px;top:403px" width="12" height="12" viewBox="0 0 12 12"><path d="M6.8 0.8 11.2 5.2 10.2 6 8.9 5.6 7 7.5 7.2 9.8 6.3 10.6 4.3 8.6 1.3 11.4 0.6 10.7 3.4 7.7 1.4 5.7 2.2 4.8 4.5 5 6.4 3.1 6 1.8z" fill="#9ea5ac"/></svg>
<svg class="abs" style="left:663px;top:434px" width="16" height="13" viewBox="0 0 16 13"><path d="M0 1.2Q0 0 1.2 0H6L8 2.2H14.8Q16 2.2 16 3.4V6H0z" fill="#eda900"/><rect x="0" y="3.3" width="16" height="9.7" rx="1.1" fill="url(#fgrad)"/></svg>
<div class="abs ext" style="left:684.0px;top:434.0px;font-size:12px;color:#ffffff;letter-spacing:0.27px;">obs-studio</div>
<svg class="abs" style="left:767px;top:435px" width="12" height="12" viewBox="0 0 12 12"><path d="M6.8 0.8 11.2 5.2 10.2 6 8.9 5.6 7 7.5 7.2 9.8 6.3 10.6 4.3 8.6 1.3 11.4 0.6 10.7 3.4 7.7 1.4 5.7 2.2 4.8 4.5 5 6.4 3.1 6 1.8z" fill="#9ea5ac"/></svg>
<svg class="abs" style="left:663px;top:466px" width="16" height="13" viewBox="0 0 16 13"><path d="M0 1.2Q0 0 1.2 0H6L8 2.2H14.8Q16 2.2 16 3.4V6H0z" fill="#eda900"/><rect x="0" y="3.3" width="16" height="9.7" rx="1.1" fill="url(#fgrad)"/></svg>
<div class="abs ext" style="left:684.0px;top:466.0px;font-size:12px;color:#ffffff;letter-spacing:-0.09px;">Rockstar</div>
<svg class="abs" style="left:767px;top:467px" width="12" height="12" viewBox="0 0 12 12"><path d="M6.8 0.8 11.2 5.2 10.2 6 8.9 5.6 7 7.5 7.2 9.8 6.3 10.6 4.3 8.6 1.3 11.4 0.6 10.7 3.4 7.7 1.4 5.7 2.2 4.8 4.5 5 6.4 3.1 6 1.8z" fill="#9ea5ac"/></svg>
<svg class="abs" style="left:663px;top:498px" width="16" height="13" viewBox="0 0 16 13"><path d="M0 1.2Q0 0 1.2 0H6L8 2.2H14.8Q16 2.2 16 3.4V6H0z" fill="#eda900"/><rect x="0" y="3.3" width="16" height="9.7" rx="1.1" fill="url(#fgrad)"/></svg>
<div class="abs ext" style="left:684.0px;top:498.0px;font-size:12px;color:#ffffff;letter-spacing:-0.25px;">Steam</div>
<svg class="abs" style="left:767px;top:499px" width="12" height="12" viewBox="0 0 12 12"><path d="M6.8 0.8 11.2 5.2 10.2 6 8.9 5.6 7 7.5 7.2 9.8 6.3 10.6 4.3 8.6 1.3 11.4 0.6 10.7 3.4 7.7 1.4 5.7 2.2 4.8 4.5 5 6.4 3.1 6 1.8z" fill="#9ea5ac"/></svg>
<svg class="abs" style="left:663px;top:530px" width="16" height="13" viewBox="0 0 16 13"><path d="M0 1.2Q0 0 1.2 0H6L8 2.2H14.8Q16 2.2 16 3.4V6H0z" fill="#eda900"/><rect x="0" y="3.3" width="16" height="9.7" rx="1.1" fill="url(#fgrad)"/></svg>
<div class="abs ext" style="left:684.0px;top:530.0px;font-size:12px;color:#ffffff;letter-spacing:0.00px;">elements</div>
<svg class="abs" style="left:663px;top:562px" width="16" height="13" viewBox="0 0 16 13"><path d="M0 1.2Q0 0 1.2 0H6L8 2.2H14.8Q16 2.2 16 3.4V6H0z" fill="#eda900"/><rect x="0" y="3.3" width="16" height="9.7" rx="1.1" fill="url(#fgrad)"/></svg>
<div class="abs ext" style="left:684.0px;top:562.0px;font-size:12px;color:#ffffff;letter-spacing:0.33px;">hudevo</div>
<svg class="abs" style="left:663px;top:594px" width="16" height="13" viewBox="0 0 16 13"><path d="M0 1.2Q0 0 1.2 0H6L8 2.2H14.8Q16 2.2 16 3.4V6H0z" fill="#eda900"/><rect x="0" y="3.3" width="16" height="9.7" rx="1.1" fill="url(#fgrad)"/></svg>
<div class="abs ext" style="left:684.0px;top:594.0px;font-size:12px;color:#ffffff;transform:scaleX(0.824);transform-origin:0 0;letter-spacing:-0.2px">STORIESSS</div>
<div class="abs ext lbl" style="left:793px;top:296px">capture</div>
<div class="abs ext lbl" style="left:910.5px;top:296px">ammo</div>
<div class="abs ext lbl" style="left:1028.5px;top:296px">chat</div>
<div class="abs ext lbl" style="left:1146.5px;top:296px">home</div>
<div class="abs ext lbl" style="left:1264.5px;top:296px">id</div>
<div class="abs ext lbl" style="left:793px;top:413px">logo</div>
<div class="abs ext lbl" style="left:910.5px;top:413px">logost</div>
<div class="abs ext lbl" style="left:1028.5px;top:413px">mic</div>
<div class="abs ext lbl" style="left:1146.5px;top:413px">online</div>
<div class="abs ext lbl" style="left:1264.5px;top:413px">rent</div>
<div class="abs ext lbl" style="left:793px;top:530px">time</div>
<div class="abs ext lbl" style="left:910.5px;top:530px">vzaim</div>
<div class="abs ext lbl" style="left:1028.5px;top:530px">zone</div>
<svg class="abs" style="left:808px;top:211px" width="86" height="67" viewBox="0 0 86 67"><defs>
<linearGradient id="bfg" x1="0" y1="0" x2="1" y2="1"><stop offset="0" stop-color="#ffe69c"/><stop offset="0.55" stop-color="#ffd76b"/><stop offset="1" stop-color="#ffc329"/></linearGradient></defs>
<path d="M1 4.5Q1 1 4.5 1H30.5Q33.5 1 35.5 3.5L39.5 9H82Q85 9 85 12V22H1z" fill="#f2b10c"/>
<path d="M2 11.8H36.5L37.5 15.5H2z" fill="#eef2f7"/>
<path d="M1 17.5Q1 14.8 3.8 14.8H34.6Q36.6 14.8 37.8 13L40 10.2H82.2Q85 10.2 85 13V63Q85 66 82 66H4Q1 66 1 63z" fill="url(#bfg)"/>
</svg>
<svg class="abs" style="left:963px;top:285px" width="8" height="7" viewBox="0 0 8 7"><rect x="0.6" y="1" width="1.8" height="5.4" rx="0.6" fill="#fff"/><rect x="3" y="1" width="1.8" height="5.4" rx="0.6" fill="#d8d8d8"/><rect x="5.4" y="1" width="1.8" height="5.4" rx="0.6" fill="#fff"/></svg>
<svg class="abs" style="left:1080px;top:279px" width="13" height="13" viewBox="0 0 13 13"><path d="M1.4 11.6V3q0-1.6 1.6-1.6h7.4q1.6 0 1.6 1.6v4.8q0 1.6-1.6 1.6H3.6z" fill="none" stroke="#e6e6e6" stroke-width="1.3" stroke-linejoin="round"/></svg>
<svg class="abs" style="left:1198px;top:278px" width="12" height="13" viewBox="0 0 12 13"><path d="M1.1 5.6 6 1.3 10.9 5.6V11.2q0 0.7-0.7 0.7H8.2V8.2q0-0.9-0.9-0.9H4.7q-0.9 0-0.9 0.9V11.9H1.8q-0.7 0-0.7-0.7z" fill="none" stroke="#ffffff" stroke-width="1.25" stroke-linejoin="round"/></svg>
<svg class="abs" style="left:1317px;top:280px" width="10" height="11" viewBox="0 0 10 11"><circle cx="5" cy="3.2" r="2.2" fill="none" stroke="#8c8c8c" stroke-width="1.1"/><path d="M0.9 10.2Q1.4 5.8 5 5.8T9.1 10.2" fill="none" stroke="#8c8c8c" stroke-width="1.1"/></svg>
<svg class="abs" style="left:1081px;top:396px" width="10" height="12" viewBox="0 0 10 12"><rect x="2.6" y="1" width="4.8" height="7" rx="2.4" fill="none" stroke="#f0f0f0" stroke-width="1.1"/><path d="M1 5.5Q1 8.6 5 8.6T9 5.5" fill="none" stroke="#e0e0e0" stroke-width="1"/><rect x="2.6" y="8.8" width="4.8" height="2.4" rx="0.6" fill="#ffffff"/></svg>
<svg class="abs" style="left:1199px;top:399px" width="10" height="9" viewBox="0 0 10 9"><path d="M1.3 7.8V4.2Q1.3 1.2 5 1.2T8.7 4.2V7.8L6.4 5.4H3.6z" fill="none" stroke="#8a8a8a" stroke-width="1.05" stroke-linejoin="round"/><path d="M3.3 3.4 4.3 4.4M6.7 3.4 5.7 4.4" stroke="#707070" stroke-width="0.9"/></svg>
<svg class="abs" style="left:1310px;top:385px" width="24" height="24" viewBox="0 0 24 24"><path d="M8.2 0.6h7.6v2.6h2.6l2.8 7.6q1.2 0.6 1.2 1.8v9.6q0 1-1 1h-2.2q-1 0-1-1V20.6H5.8v1.6q0 1-1 1H2.6q-1 0-1-1v-9.6q0-1.2 1.2-1.8l2.8-7.6h2.6z" fill="#ffffff"/><path d="M6.6 5.2h10.8l1.9 5.2H4.7z" fill="#1a1a1a"/><circle cx="5.8" cy="14.6" r="1.6" fill="#1a1a1a"/><circle cx="18.2" cy="14.6" r="1.6" fill="#1a1a1a"/></svg>
<svg class="abs" style="left:1404px;top:376px" width="16" height="31" viewBox="0 0 16 31"><path d="M9.5 4Q6 13 4.6 28.6H14V18L16 17V4z" fill="#5c5c5c" stroke="#050505" stroke-width="1"/><path d="M12.5 4.2 14 2.6 16 2.8V9.5L13.5 8.8z" fill="#d0d0d0"/><path d="M7 3.6 12 2" stroke="#050505" stroke-width="1.6"/><rect x="14.2" y="18" width="1.8" height="11" fill="#080808"/></svg>
<svg class="abs" style="left:844px;top:515px" width="11" height="11" viewBox="0 0 11 11"><circle cx="5.5" cy="5.5" r="4.4" fill="none" stroke="#7e7e7e" stroke-width="1.1"/><path d="M5 3v3l2 1.3" fill="none" stroke="#7e7e7e" stroke-width="1"/></svg>
<svg class="abs" style="left:962px;top:512px" width="12" height="14" viewBox="0 0 12 14"><path d="M1.6 5.6V5.2q0-1.4 1.4-1.4h7.2M8.4 1.6l2.2 2.2-2.2 2.2M10.4 8.4v0.4q0 1.4-1.4 1.4H1.8M3.6 8l-2.2 2.2 2.2 2.2" fill="none" stroke="#e6e6e6" stroke-width="1.3" stroke-linecap="round" stroke-linejoin="round"/></svg>
<svg class="abs" style="left:1073px;top:500px" width="26" height="26" viewBox="0 0 26 26"><path d="M13 2.2 23.2 5.8V12q0 7.6-10.2 11.8Q2.8 19.6 2.8 12V5.8z" fill="none" stroke="#ffffff" stroke-width="2.4" stroke-linejoin="round"/><path d="M13 6.6V18.6M9.8 8.8 13 11.6 16.2 8.8M7.6 12.6 13 16.8 18.4 12.6" fill="none" stroke="#ffffff" stroke-width="2.6" stroke-linecap="round" stroke-linejoin="round"/></svg>
<svg class="abs" style="left:814px;top:340px" width="71" height="69" viewBox="0 0 71 69"><defs>
<linearGradient id="lg1" x1="0" y1="0" x2="1" y2="0"><stop offset="0" stop-color="#8a8a8a"/><stop offset="0.45" stop-color="#bdbdbd"/><stop offset="0.62" stop-color="#ececec"/><stop offset="1" stop-color="#f2f2f2"/></linearGradient>
<linearGradient id="lg2" x1="0" y1="0.2" x2="0.9" y2="0"><stop offset="0" stop-color="#6e6e6e"/><stop offset="0.4" stop-color="#a0a0a0"/><stop offset="0.6" stop-color="#e0e0e0"/><stop offset="1" stop-color="#f4f4f4"/></linearGradient>
<linearGradient id="lg3" x1="0" y1="1" x2="0.3" y2="0"><stop offset="0" stop-color="#9a9a9a"/><stop offset="0.3" stop-color="#4a4a4a"/><stop offset="1" stop-color="#6a6a6a"/></linearGradient></defs>
<rect width="71" height="69" fill="#141414"/>
<path d="M1 1.2H65L54.6 21.2 64.6 31.8 18.8 18.4z" fill="url(#lg1)" stroke="#d0d0d0" stroke-width="0.6"/>
<path d="M19.2 23.8 69 35.2 1.8 67.6z" fill="url(#lg2)" stroke="#e6e6e6" stroke-width="0.7"/>
<path d="M51.4 47.6 63.8 68.4H13z" fill="url(#lg3)"/>
<path d="M14 65.6H63.6L64.6 68.4H12z" fill="#b8b8b8"/>
</svg>
<svg class="abs" style="left:923px;top:318px" width="91" height="91" viewBox="0 0 91 91"><defs>
<linearGradient id="gg" x1="0" y1="0" x2="1" y2="1"><stop offset="0" stop-color="#12b812"/><stop offset="0.6" stop-color="#0a9a0a"/><stop offset="1" stop-color="#078607"/></linearGradient></defs>
<rect width="91" height="91" fill="#151515"/>
<polygon points="39.0,34.0 62.0,34.0 67.0,64.0 74.0,66.5 76.5,75.0 71.0,79.5 53.0,72.5 35.0,65.0" fill="url(#gg)"/>
<polygon points="4.0,50.0 13.0,43.0 22.0,36.0 21.0,54.0 15.0,55.5 7.0,53.0" fill="url(#gg)"/>
<polygon points="1.5,50.5 6.0,43.5 14.0,38.0 23.5,32.5 24.5,38.5 18.0,41.5 12.0,46.0 7.0,50.5 3.5,54.0" fill="#f3f5f8"/>
<polygon points="24.0,21.0 45.0,21.5 50.5,26.0 57.0,22.0 74.6,21.5 87.8,68.4 66.2,64.4 59.0,40.3 50.1,46.4 40.2,40.3 35.3,64.8 14.1,70.0" fill="#ffffff"/>
<polygon points="43.5,21.0 58.0,19.0 58.0,27.0 50.5,34.5 43.5,27.0" fill="#10b010"/>
<polygon points="60.0,17.5 72.0,14.0 74.5,22.5 59.0,23.0" fill="#18c418"/>
<path d="M15.5 25.5q2-2.5 4.5-0.5l3 4-1 5-4-1.5-3-4z" fill="#d81e1e"/>
<path d="M20.5 21.5 25.5 20 28 21.5 24 24.5z" fill="#e8e8e8"/><path d="M21.5 21.2 23 23.6M24 20.4 25.6 22.6" stroke="#d81e1e" stroke-width="1.1"/>
<polygon points="43.5,23.5 49.0,18.0 59.0,13.2 71.0,10.2 73.0,13.5 71.5,16.5 61.0,18.5 51.0,22.0 45.0,26.0" fill="#eef1f6"/>
</svg>
<svg class="abs" style="left:1040px;top:530px" width="380" height="70" viewBox="1040 530 380 70"><defs><linearGradient id="wmg" gradientUnits="userSpaceOnUse" x1="1049" y1="0" x2="1383" y2="0"><stop offset="0" stop-color="#393b63"/><stop offset="0.5" stop-color="#413e62"/><stop offset="0.7" stop-color="#4b425d"/><stop offset="1" stop-color="#4c445f"/></linearGradient></defs>
<g font-family="Liberation Sans" font-weight="bold" font-size="63" stroke-linejoin="round"><g fill="#5e5e66" stroke="#606068" stroke-width="1.5"><text transform="translate(1045.78 574.5) scale(0.978 1)">r</text><text transform="translate(1071.14 574.5) scale(0.857 1)">a</text><text transform="translate(1104.31 574.5) scale(0.968 1)">g</text><text transform="translate(1141.43 574.5) scale(1.009 1)">e</text><text transform="translate(1176.85 574.5) scale(0.985 1)">m</text><text transform="translate(1233.21 574.5) scale(0.911 1)">p</text><text transform="translate(1288.44 574.5) scale(0.932 1)">p</text><text transform="translate(1324.54 574.5) scale(0.988 1)">r</text><text transform="translate(1347.53 574.5) scale(0.954 1)">o</text><circle cx="1278.2" cy="569" r="5.7"/></g><g stroke-width="0.2"><text transform="translate(1045.78 574.5) scale(0.978 1)" fill="#3a3b63" stroke="#3a3b63">r</text><text transform="translate(1071.14 574.5) scale(0.857 1)" fill="#3a3c63" stroke="#3a3c63">a</text><text transform="translate(1104.31 574.5) scale(0.968 1)" fill="#3c3c62" stroke="#3c3c62">g</text><text transform="translate(1141.43 574.5) scale(1.009 1)" fill="#3e3d63" stroke="#3e3d63">e</text><text transform="translate(1176.85 574.5) scale(0.985 1)" fill="#403e62" stroke="#403e62">m</text><text transform="translate(1233.21 574.5) scale(0.911 1)" fill="#464060" stroke="#464060">p</text><text transform="translate(1288.44 574.5) scale(0.932 1)" fill="#4b425d" stroke="#4b425d">p</text><text transform="translate(1324.54 574.5) scale(0.988 1)" fill="#4c435e" stroke="#4c435e">r</text><text transform="translate(1347.53 574.5) scale(0.954 1)" fill="#4c445f" stroke="#4c445f">o</text><circle cx="1278.2" cy="569" r="5.7" fill="#4a425d" stroke="#4a425d"/></g></g></svg>
</body></html>
